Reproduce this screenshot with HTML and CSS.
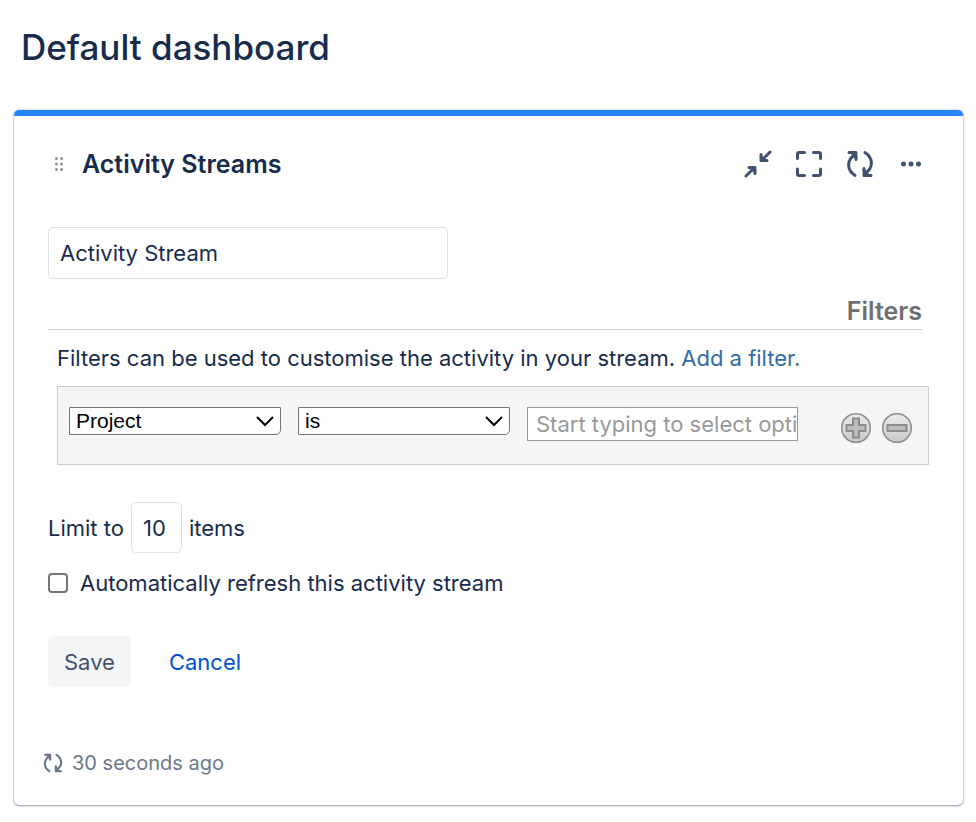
FILE: index.html
```
<!DOCTYPE html>
<html lang="en">
<head>
  <meta charset="UTF-8">
  <meta name="viewport" content="width=device-width, initial-scale=1.0">
  <title>Default dashboard</title>
  <link rel="stylesheet" href="styles.css">
</head>
<body>
  <svg width="0" height="0" class="sprite" aria-hidden="true">
    <symbol id="icon-refresh" viewBox="0 0 28 28">
      <path d="M9 25.500 C0.500 20 0.500 10 9 4.500 M19 2.500 C27.500 8 27.500 18 19 23.500" stroke-width="3"/>
      <path d="M3 2.500 H10 V9.500 M25 25.500 H18 V18.500" stroke-width="3"/>
      <path d="M5 3 H10 V9 Z M23 25 H18 V19 Z" fill="currentColor"/>
    </symbol>
  </svg>

  <h1 class="page-title">Default dashboard</h1>

  <main class="gadget">
    <header class="gadget-header">
      <svg class="drag-handle" width="8" height="14" viewBox="0 0 8 14" aria-hidden="true">
        <circle cx="1.500" cy="1.500" r="1.500"/><circle cx="6.500" cy="1.500" r="1.500"/>
        <circle cx="1.500" cy="7" r="1.500"/><circle cx="6.500" cy="7" r="1.500"/>
        <circle cx="1.500" cy="12.500" r="1.500"/><circle cx="6.500" cy="12.500" r="1.500"/>
      </svg>
      <h2 class="gadget-title">Activity Streams</h2>
      <div class="gadget-actions">
        <button type="button" class="icon-btn" aria-label="Minimise">
          <svg width="28" height="28" viewBox="0 0 28 28">
            <path d="M26 2 L18 10 M17 4.500 V10.500 H23 M2 26 L10 18 M5 17.500 H11 V23.500" stroke-width="3"/>
            <path d="M17 5 L22.500 10.500 H17 Z M5.500 17.500 H11 V23 Z" class="solid"/>
          </svg>
        </button>
        <button type="button" class="icon-btn" aria-label="Maximise">
          <svg width="28" height="28" viewBox="0 0 28 28">
            <path d="M2.500 8.500 V4 Q2.500 2.500 4 2.500 H9.500 M18.500 2.500 H24 Q25.500 2.500 25.500 4 V8.500 M25.500 19 V24 Q25.500 25.500 24 25.500 H18.500 M9.500 25.500 H4 Q2.500 25.500 2.500 24 V19" stroke-width="3"/>
          </svg>
        </button>
        <button type="button" class="icon-btn" aria-label="Refresh">
          <svg width="28" height="28"><use href="#icon-refresh"/></svg>
        </button>
        <button type="button" class="icon-btn" aria-label="More actions">
          <svg width="28" height="28" viewBox="0 0 28 28">
            <path d="M6.500 14 H6.510 M14 14 H14.010 M21.500 14 H21.510" stroke-width="5"/>
          </svg>
        </button>
      </div>
    </header>

    <form class="config">
      <input type="text" class="field title-field" value="Activity Stream" aria-label="Title">

      <h3 class="filters-heading">Filters</h3>
      <div class="filters">
        <p class="filters-help">Filters can be used to customise the activity in your stream. <a href="#">Add a filter.</a></p>
        <div class="filter-row">
          <div class="select-wrap">
            <select class="filter-select" aria-label="Filter by">
              <option>Project</option>
            </select>
            <svg class="chevron" width="18" height="12" viewBox="0 0 18 12" aria-hidden="true"><path d="M1 2 L9 10 L17 2"/></svg>
          </div>
          <div class="select-wrap">
            <select class="filter-select" aria-label="Operator">
              <option>is</option>
            </select>
            <svg class="chevron" width="18" height="12" viewBox="0 0 18 12" aria-hidden="true"><path d="M1 2 L9 10 L17 2"/></svg>
          </div>
          <input type="text" class="filter-value" placeholder="Start typing to select options" aria-label="Filter value">
          <div class="row-actions">
            <button type="button" class="round-btn" aria-label="Add filter">
              <svg width="32" height="32" viewBox="0 0 32 32">
                <defs>
                  <linearGradient id="metal" x1="0" y1="0" x2="0" y2="1">
                    <stop offset="0" stop-color="#ececec"/>
                    <stop offset="1" stop-color="#c8c8c8"/>
                  </linearGradient>
                </defs>
                <circle cx="16" cy="16" r="14.300" fill="url(#metal)" stroke="#8c8c8c" stroke-width="1.500"/>
                <path d="M13 6.500 H19 V13 H25.500 V19 H19 V25.500 H13 V19 H6.500 V13 H13 Z" fill="#bcbcbc" stroke="#8c8c8c" stroke-width="2"/>
              </svg>
            </button>
            <button type="button" class="round-btn" aria-label="Remove filter">
              <svg width="32" height="32" viewBox="0 0 32 32">
                <circle cx="16" cy="16" r="14.300" fill="url(#metal)" stroke="#8c8c8c" stroke-width="1.500"/>
                <path d="M6.500 13 H25.500 V19 H6.500 Z" fill="#bcbcbc" stroke="#8c8c8c" stroke-width="2"/>
              </svg>
            </button>
          </div>
        </div>
      </div>

      <div class="limit">
        <label for="limit">Limit to</label>
        <input type="text" id="limit" class="field limit-field" value="10">
        <span>items</span>
      </div>

      <div class="auto-refresh">
        <input type="checkbox" id="auto-refresh" class="checkbox">
        <label for="auto-refresh">Automatically refresh this activity stream</label>
      </div>

      <div class="buttons">
        <button type="submit" class="btn">Save</button>
        <a href="#" class="cancel">Cancel</a>
      </div>
    </form>

    <footer class="gadget-footer">
      <svg width="20" height="20" aria-hidden="true"><use href="#icon-refresh"/></svg>
      <span>30 seconds ago</span>
    </footer>
  </main>
</body>
</html>
```
FILE: styles.css
```
* {
  box-sizing: border-box;
}
body {
  margin: 0;
  padding: 20px 13px 16px 14px;
  background-color: #fff;
  color: #172b4d;
  font-family: "Inter", "Liberation Sans", sans-serif;
  font-size: 22px;
  line-height: 28px;
}
h1, h2, h3, p {
  margin: 0;
}
input, select, button {
  font: inherit;
  color: inherit;
}
svg {
  display: block;
  fill: none;
  stroke: currentColor;
}
.sprite {
  position: absolute;
}
.page-title {
  padding-left: 7px;
  margin-bottom: 36px;
  font-size: 35px;
  line-height: 54px;
  font-weight: 500;
}
.gadget {
  border-top: 6px solid #2684ff;
  border-radius: 5px;
  box-shadow: 0 1px 2px rgba(9, 30, 66, 0.4), 0 0 2px rgba(9, 30, 66, 0.35);
  padding: 28px 32px 28px 34px;
}
.gadget-header {
  display: flex;
  align-items: center;
  height: 40px;
}
.drag-handle {
  margin: 0 19px 0 7px;
  color: #8993a4;
}
.drag-handle circle {
  fill: currentColor;
  stroke: none;
}
.gadget-title {
  font-size: 25px;
  line-height: 30px;
  font-weight: 600;
}
.gadget-actions {
  display: flex;
  gap: 11px;
  margin-left: auto;
  color: #42526e;
}
.icon-btn {
  display: flex;
  align-items: center;
  justify-content: center;
  width: 40px;
  height: 40px;
  padding: 0;
  border: none;
  background: none;
  cursor: pointer;
}
.icon-btn svg, .gadget-footer svg {
  stroke-linecap: round;
  stroke-linejoin: round;
}
.solid {
  fill: currentColor;
}
.config {
  padding: 43px 2px 0 0;
}
.field {
  display: block;
  height: 51px;
  padding: 0 11px;
  border: 1px solid #dfe1e5;
  border-radius: 5px;
  background-color: #fff;
}
.title-field {
  width: 400px;
  height: 52px;
  max-width: 100%;
}
.filters-heading {
  margin: 15px 7px 0 0;
  padding: 3px 0;
  border-bottom: 1px solid #ccc;
  color: #707070;
  font-size: 25px;
  line-height: 29px;
  font-weight: 600;
  text-align: right;
}
.filters {
  padding-left: 9px;
}
.filters-help {
  padding: 14px 0;
}
.filters-help a {
  color: #326ca6;
  text-decoration: none;
}
.filter-row {
  display: flex;
  align-items: flex-start;
  gap: 17px;
  height: 79px;
  padding: 20px 15px 0 11px;
  border: 1px solid #ccc;
  background-color: #f5f5f5;
}
.select-wrap {
  position: relative;
  width: 212px;
}
.filter-select {
  display: block;
  appearance: none;
  width: 100%;
  height: 28px;
  padding: 0 30px 0 6px;
  border: 1px solid #767676;
  border-radius: 0 0 5px 0;
  background-color: #fff;
  color: #000;
  font-family: "Liberation Sans", Arial, sans-serif;
  font-size: 21px;
  line-height: 26px;
}
.chevron {
  position: absolute;
  top: 8px;
  right: 7px;
  color: #000;
  stroke-width: 2;
  pointer-events: none;
}
.filter-value {
  width: 271px;
  height: 34px;
  padding: 0 0 0 8px;
  border: 1px solid #999;
  background-color: #fff;
}
.filter-value::placeholder {
  color: #999;
}
.row-actions {
  display: flex;
  gap: 9px;
  margin: 5px 0 0 auto;
}
.round-btn {
  padding: 0;
  border: none;
  background: none;
  cursor: pointer;
}
.round-btn svg {
  stroke: none;
}
.limit {
  display: flex;
  align-items: center;
  gap: 7px;
  margin-top: 37px;
}
.limit-field {
  width: 51px;
}
.auto-refresh {
  display: flex;
  align-items: center;
  gap: 12px;
  margin-top: 16px;
}
.checkbox {
  appearance: none;
  width: 20px;
  height: 20px;
  margin: 0;
  border: 2px solid #767676;
  border-radius: 4px;
  background-color: #fff;
}
.checkbox:checked {
  background-color: #0052cc;
}
.buttons {
  display: flex;
  align-items: center;
  gap: 38px;
  margin-top: 39px;
}
.btn {
  height: 51px;
  padding: 0 16px;
  border: none;
  border-radius: 5px;
  background-color: #f4f5f7;
  color: #42526e;
  cursor: pointer;
}
.cancel {
  color: #0052cc;
  text-decoration: none;
}
.gadget-footer {
  display: flex;
  align-items: center;
  gap: 9px;
  margin: 62px 0 0 -5px;
  color: #6b778c;
  font-size: 20px;
}
```
